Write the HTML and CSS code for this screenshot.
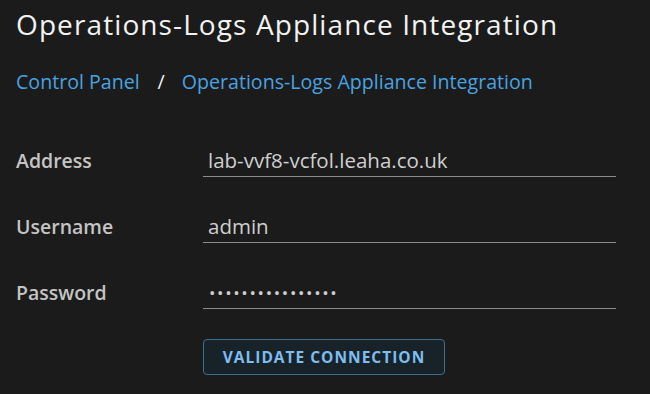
FILE: index.html
```html
<!DOCTYPE html>
<html lang="en">
<head>
  <meta charset="UTF-8">
  <title>Operations-Logs Appliance Integration</title>
  <link rel="stylesheet" href="styles.css">
</head>
<body>

  <h1>Operations-Logs Appliance Integration</h1>

  <nav class="breadcrumb">
    <a href="#">Control Panel</a>
    <span class="sep">/</span>
    <a href="#">Operations-Logs Appliance Integration</a>
  </nav>

  <form class="settings-form">
    <div class="form-row">
      <label for="address">Address</label>
      <input type="text" id="address" value="lab-vvf8-vcfol.leaha.co.uk" />
    </div>

    <div class="form-row">
      <label for="username">Username</label>
      <input type="text" id="username" value="admin" />
    </div>

    <div class="form-row">
      <label for="password">Password</label>
      <input type="password" id="password" value="secretpassword12" />
    </div>

    <div class="form-actions">
      <button type="button" class="btn-outline">Validate Connection</button>
    </div>
  </form>

</body>
</html>
```

FILE: styles.css
```css
body {
  font-family: "Open Sans", Lato, sans-serif;
  background: #1b1b1b;
  color: #e6e6e6;
  margin: 0;
  padding: 0 16px;
}

h1 {
  font-size: 28px;
  font-weight: 400;
  letter-spacing: 1.1px;
  line-height: 36px;
  margin: 6px 0 0;
  color: #f2f2f2;
}

.breadcrumb {
  display: flex;
  align-items: center;
  margin-top: 28px;
  font-size: 19.6px;
  line-height: 24px;
}

.breadcrumb a {
  color: #4aa3e0;
  text-decoration: none;
}

.breadcrumb .sep {
  color: #f2f2f2;
  margin: 0 17px 0 18px;
}

.settings-form {
  margin-top: 50px;
  display: flex;
  flex-direction: column;
  gap: 33px;
}

.form-row {
  display: flex;
  align-items: center;
  height: 33px;
}

.form-row label {
  width: 187px;
  font-size: 19.5px;
  font-weight: 600;
  color: #c4c4c4;
}

.form-row input {
  width: 413px;
  height: 33px;
  box-sizing: border-box;
  background: transparent;
  border: none;
  border-bottom: 1px solid #8c8c8c;
  color: #cfcfcf;
  font-family: inherit;
  font-size: 20.5px;
  padding: 0 5px;
  outline: none;
}

.form-row input[type="password"] {
  font-size: 17px;
  letter-spacing: 1.7px;
  padding-left: 6px;
}

.form-actions {
  padding-left: 187px;
  margin-top: -3px;
}

.btn-outline {
  background: #172329;
  color: #7fbdf0;
  border: 1px solid #3c6e8f;
  border-radius: 4px;
  height: 36px;
  width: 242px;
  font-family: inherit;
  font-size: 15.5px;
  font-weight: 700;
  letter-spacing: 1px;
  text-transform: uppercase;
  cursor: pointer;
}
```
